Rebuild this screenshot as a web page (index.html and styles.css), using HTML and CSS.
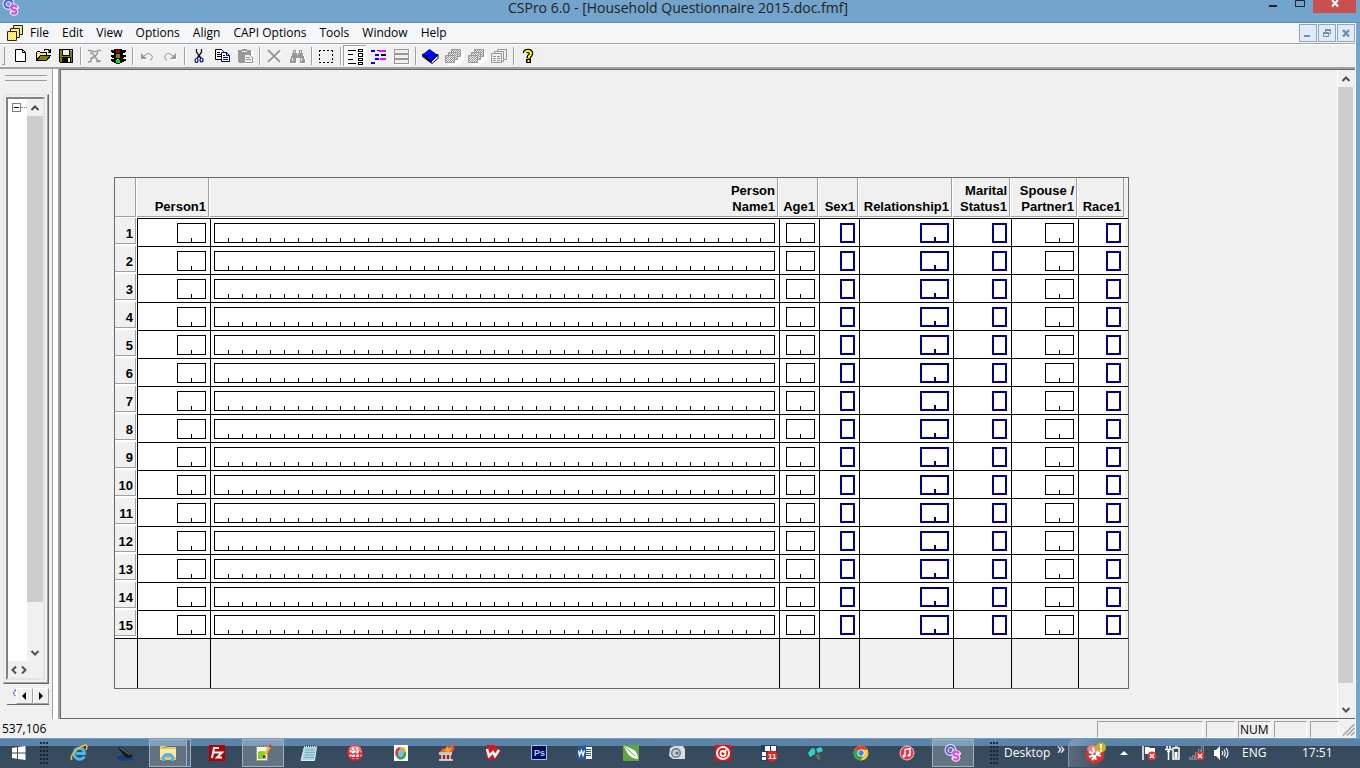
FILE: index.html
```
<!DOCTYPE html>
<html lang="en">
<head>
<meta charset="utf-8">
<title>CSPro 6.0 - [Household Questionnaire 2015.doc.fmf]</title>
<link rel="stylesheet" href="styles.css">
</head>
<body>
<svg width="0" height="0" class="defs" aria-hidden="true">
  <defs>
    <pattern id="dither" width="2" height="2" patternUnits="userSpaceOnUse"><path fill="#f0f0f0" d="M0 0h2v2H0z"/><path fill="#989898" d="M0 0h1v1H0zM1 1h1v1H1z"/></pattern>
    <pattern id="yellowdither" width="2" height="2" patternUnits="userSpaceOnUse"><path fill="#fff9c8" d="M0 0h2v2H0z"/><path fill="#f0e030" d="M0 0h1v1H0zM1 1h1v1H1z"/></pattern>
    <symbol id="cs" viewBox="0 0 18 18">
      <g fill="none" stroke="#f0eafa" stroke-width="4" stroke-linecap="round"><ellipse cx="6.500" cy="6" rx="4" ry="4"/><path d="M15 9.500Q13 7 10.500 8Q8.500 9.500 10.500 11.500L13.500 12Q15.500 14 13 15.500Q11 16 9.500 14.500"/></g>
      <path fill="none" stroke="#5a55d8" stroke-width="2" d="M10.500 4.500Q8.500 1.500 5.500 2.200Q2 3.500 2.700 7Q4 10.300 7.500 9.800"/>
      <path fill="none" stroke="#9a8be8" stroke-width="1.500" d="M10.500 4.500Q11 8 7.500 9.800"/>
      <path fill="none" stroke="#e04ad8" stroke-width="2.200" d="M15 9.500Q13 7 10.500 8Q8.500 9.500 10.500 11.500L13.500 12Q15.500 14 13 15.500Q11 16 9.500 14.500"/>
    </symbol>
    <symbol id="stack" viewBox="0 0 22 20">
      <path fill="#fff" d="M9 5h13v9h-3v3h-3v2H6v-6h3z"/>
      <g fill="url(#dither)" stroke="#989898"><path d="M9.500 3.500h9v7h-9z"/><path d="M6.500 6.500h9v7h-9z"/><path d="M3.500 9.500h9v7h-9z"/></g>
    </symbol>
    <symbol id="up" viewBox="0 0 10 8"><path fill="none" stroke="#505050" stroke-width="2" d="M1.500 6L5 2.500L8.500 6"/></symbol>
    <symbol id="down" viewBox="0 0 10 8"><path fill="none" stroke="#505050" stroke-width="2" d="M1.500 2L5 5.500L8.500 2"/></symbol>
  </defs>
</svg>

<div class="window">
  <header class="titlebar">
    <svg class="app-icon" width="18" height="18" aria-hidden="true"><use href="#cs"/></svg>
    <h1 class="title">CSPro 6.0 - [Household Questionnaire 2015.doc.fmf]</h1>
    <div class="window-buttons">
      <button class="win-btn" aria-label="Minimize"><svg width="27" height="13"><path fill="#222" d="M9 5h8v2H9z"/></svg></button>
      <button class="win-btn" aria-label="Maximize"><svg width="26" height="13"><path fill="none" stroke="#222" stroke-width="1" d="M8.500 .500h9v6h-9z"/></svg></button>
      <button class="win-btn close" aria-label="Close"><svg width="46" height="13"><path fill="none" stroke="#fff" stroke-width="2" d="M20 0l6 6.500M26 0l-6 6.500"/></svg></button>
    </div>
  </header>

  <div class="client">
    <div class="menubar">
      <svg class="doc-icon" width="17" height="17" aria-hidden="true"><g fill="url(#yellowdither)" stroke="#222"><path d="M6.500 .500h9v9h-9z"/><path d="M3.500 3.500h9v9h-9z"/><path d="M.500 6.500h9v9h-9z"/></g></svg>
      <nav class="menus">
        <button>File</button><button>Edit</button><button>View</button><button>Options</button><button>Align</button><button>CAPI Options</button><button>Tools</button><button>Window</button><button>Help</button>
      </nav>
      <div class="doc-buttons">
        <button aria-label="Minimize document"><svg width="16" height="16"><path fill="#7a8ca2" d="M4 10h6v2H4z"/></svg></button>
        <button aria-label="Restore document"><svg width="16" height="16"><path fill="none" stroke="#7a8ca2" stroke-width="1" d="M4.500 7.500h5v4h-5zM4 8.500h6M6.500 7V4.500h5v4h-2M6 5.500h6"/></svg></button>
        <button aria-label="Close document"><svg width="16" height="16"><path fill="none" stroke="#7a8ca2" stroke-width="2.500" d="M5 5l6 6.500M11 5l-6 6.500"/></svg></button>
      </div>
    </div>

    <div class="toolbar" role="toolbar" aria-label="Standard">
      <span class="grip"></span>
      <button aria-label="New"><svg width="22" height="20"><path fill="#fff" stroke="#000" d="M6.500 3.500h7l3 3v9h-10z"/><path fill="none" stroke="#000" d="M13.500 3.500v3h3"/></svg></button>
      <button aria-label="Open"><svg width="22" height="20" shape-rendering="crispEdges"><path fill="url(#yellowdither)" stroke="#000" d="M4.500 14.500v-8l1-1h2l1 1h6v3h-6z"/><path fill="#808000" stroke="#000" d="M4.500 14.500l4-5h10l-4 5z"/><path fill="none" stroke="#000" d="M12 4.500l1-1h3l2 2M18.500 3v3h-3"/></svg></button>
      <button aria-label="Save"><svg width="22" height="20" shape-rendering="crispEdges"><path fill="#808000" stroke="#000" d="M4.500 3.500h13v13h-12l-1-1z"/><path fill="#f0f0f0" stroke="#000" d="M7.500 3.500h7v6h-7z"/><path d="M7 11h9v6H7z"/><path fill="#f0f0f0" d="M13 12h2v4h-2zM16 4h1v1h-1z"/></svg></button>
      <span class="sep"></span>
      <button aria-label="Compile" disabled><svg width="22" height="20"><path fill="none" stroke="#fff" d="M5 5.500h12M7 8l9 9M16 7l-9 9H18"/><path fill="none" stroke="#989898" stroke-width="1.500" d="M4 4.500h3l1 1h5l1-1h3M6 7l3 1 5 7h3M14 6.500l-2 3-5 3v3l-3 .500M7 12h3M12 15.500h4"/></svg></button>
      <button aria-label="Run"><svg width="22" height="20" shape-rendering="crispEdges"><path d="M4 4h3V3h8v1h4v2h-1v1h-2v2h3v2h-2v1h-1v1h3v2h-2v1h-2v1h-2v1H9v-1H7v-1H5v-1H4v-2h3v-1H5v-1H4V9h3V7H5V6H4z"/><path fill="#a00000" d="M9 4h4v3H9z"/><path fill="#808000" d="M9 8h4v4H9z"/><path fill="#00f000" d="M10 13h2v1h1v3H9v-3h1z"/><path fill="#ff0" d="M10 13h1v1h-1z"/></svg></button>
      <span class="sep"></span>
      <button aria-label="Undo" disabled><svg width="22" height="20"><path fill="#fff" d="M6 8v6h6z"/><path fill="#989898" d="M5 7v6h6z"/><path fill="none" stroke="#989898" d="M8 10q4-4 7-1.500q3 2.500 0 5.500h-1"/></svg></button>
      <button aria-label="Redo" disabled><svg width="22" height="20"><path fill="#fff" d="M18 8v6h-6z"/><path fill="#989898" d="M17 7v6h-6z"/><path fill="none" stroke="#989898" d="M14 10q-4-4-7-1.500q-3 2.500 0 5.500h1"/></svg></button>
      <span class="sep"></span>
      <button aria-label="Cut"><svg width="22" height="20"><path fill="none" stroke="#000" stroke-width="1.300" d="M8.500 3v3l4 6M13.500 3v3l-4 6"/><path fill="none" stroke="#000080" stroke-width="1.300" d="M10 10.500l-1 2M12 10.500l1 2"/><ellipse cx="8.500" cy="14.500" rx="1.500" ry="2" fill="none" stroke="#000080" stroke-width="1.200"/><ellipse cx="13.500" cy="14" rx="1.500" ry="2" fill="none" stroke="#000080" stroke-width="1.200"/></svg></button>
      <button aria-label="Copy"><svg width="22" height="20"><path fill="#fff" stroke="#000" d="M4.500 3.500h6l2 2v8h-8z"/><path stroke="#000" d="M6 6.500h3M6 8.500h4M6 10.500h4"/><path fill="#fff" stroke="#000080" d="M10.500 6.500h5l3 3v6h-8zM15.500 6.500v3h3"/><path stroke="#000080" d="M12 9.500h2M12 11.500h5M12 13.500h5"/></svg></button>
      <button aria-label="Paste" disabled><svg width="22" height="20" shape-rendering="crispEdges"><path fill="#fff" d="M6 5h13v13H10v-1H6z"/><path fill="#989898" d="M4 4h4V3h5v1h4v13H5v-1H4z"/><path fill="#eee" d="M8 5h5v1H8z"/><path fill="#f0f0f0" stroke="#989898" d="M10.500 8.500h5l3 3v5h-8z"/><path stroke="#989898" d="M12 11.500h4M12 13.500h5"/></svg></button>
      <span class="sep"></span>
      <button aria-label="Delete" disabled><svg width="22" height="20"><path fill="none" stroke="#fff" stroke-width="2" d="M6 5l12 12M18 6L6 17"/><path fill="none" stroke="#989898" stroke-width="1.800" d="M5 4l12 12M17 4.500L5 16"/></svg></button>
      <button aria-label="Find" disabled><svg width="22" height="20" shape-rendering="crispEdges"><path fill="#fff" d="M8 5h3v4h2V5h3l4 8v5h-6v-5h-3v5H6v-6z"/><path fill="#989898" d="M7 4h3v3h1v2h1V7h1V4h3v3h1v3h1v3h1v4h-5v-5h-4v5H4v-4h1v-3h1V7h1z"/><path fill="#eee" d="M8 5h1v2H8zM14 5h1v2h-1zM6 12h1v3H6zM15 12h1v3h-1z"/></svg></button>
      <span class="sep"></span>
      <button aria-label="Select items"><svg width="22" height="20" shape-rendering="crispEdges"><path fill="none" stroke="#000" stroke-width="1" stroke-dasharray="2 2" d="M4 4.500h14M4 16.500h14M4.500 4v13M17.500 4v13"/></svg></button>
      <span class="sep"></span>
      <button class="pressed" aria-label="Form view" aria-pressed="true"><svg width="22" height="20" shape-rendering="crispEdges"><path stroke="#000" d="M4 4.500h8M4 8.500h5M4 13.500h5M4 17.500h8"/><g fill="#fff" stroke="#000"><path d="M14.500 3.500h4v2h-4zM14.500 7.500h4v3h-4zM14.500 12.500h4v2h-4zM14.500 16.500h4v2h-4z"/></g></svg></button>
      <button aria-label="Logic view"><svg width="22" height="20" shape-rendering="crispEdges"><path fill="#00f" d="M4 4h4v2H4zM8 8h4v2H8zM8 12h4v2H8zM4 16h4v2H4z"/><path fill="#f0f" d="M12 4h7v2h-7zM13 12h6v2h-6z"/><path fill="#000080" d="M10 4h2v1h-2z"/><path d="M14 8h5v2h-5z"/></svg></button>
      <button aria-label="Grid view" disabled><svg width="22" height="20" shape-rendering="crispEdges"><path fill="none" stroke="#fff" d="M5.500 4.500h14v14h-14z"/><path fill="#f0f0f0" stroke="#989898" d="M4.500 3.500h14v14h-14zM4 7.500h14M4 8.500h14M4 12.500h14M4 13.500h14"/></svg></button>
      <span class="sep"></span>
      <button aria-label="Data dictionary"><svg width="22" height="20"><path fill="#fff" stroke="#000" d="M3.500 8.500v2L13 17.500l6-5v-4z"/><path fill="#00f" stroke="#0000a0" d="M3.500 8.500l2-1L10.500 3.500l8 6-6 6z"/><path stroke="#000" stroke-width="1.500" d="M3.500 9l9 7.500"/></svg></button>
      <button aria-label="Forms" disabled><svg width="22" height="20"><use href="#stack"/></svg></button>
      <button aria-label="Order" disabled><svg width="22" height="20"><use href="#stack"/></svg></button>
      <button aria-label="Tables" disabled><svg width="22" height="20"><g fill="#f0f0f0" stroke="#989898"><path d="M9.500 3.500h9v10h-9z"/><path d="M6.500 5.500h9v10h-9z"/><path d="M3.500 7.500h10v9h-10zM5 10.500h3M9 10.500h3M5 12.500h3M9 12.500h3M5 14.500h3M9 14.500h3"/></g></svg></button>
      <span class="sep"></span>
      <button aria-label="Help"><svg width="22" height="20"><path fill="none" stroke="#000" stroke-width="4.500" d="M8 7q0-2 3-2t3 2.500q0 1.500-2 3l-.500 2"/><path fill="#000" d="M9 13h5v4H9z"/><path fill="none" stroke="#ff0" stroke-width="2" d="M8 7q0-2 3-2t3 2.500q0 1.500-2 3v1.500"/><path fill="#ff0" d="M10.500 14h2v2h-2z"/></svg></button>
    </div>

    <main class="workspace">
      <aside class="dock">
        <div class="dock-grip"></div>
        <div class="tree-frame">
          <div class="tree-box">
            <div class="tree-row">
              <div class="tree"><button class="expander" aria-label="Collapse"></button><span class="dots"></span></div>
              <div class="scroll">
                <button aria-label="Scroll up"><svg width="10" height="8"><use href="#up"/></svg></button>
                <span class="thumb"></span>
                <span class="track"></span>
                <button aria-label="Scroll down"><svg width="10" height="8"><use href="#down"/></svg></button>
              </div>
            </div>
            <div class="hscroll">
              <button aria-label="Scroll left"><svg width="8" height="10"><path fill="none" stroke="#505050" stroke-width="2" d="M6 1.500L2.500 5L6 8.500"/></svg></button>
              <button aria-label="Scroll right"><svg width="8" height="10"><path fill="none" stroke="#505050" stroke-width="2" d="M2 1.500L5.500 5L2 8.500"/></svg></button>
            </div>
          </div>
        </div>
        <div class="tabs">
          <svg width="9" height="16" aria-hidden="true"><path fill="none" stroke="#6a60e0" stroke-width="1.500" stroke-dasharray="2 1" d="M9 2Q5 4 8 8"/></svg>
          <button aria-label="Previous tab"><svg width="12" height="12"><path d="M8 2v8L4 6z"/></svg></button>
          <button aria-label="Next tab"><svg width="12" height="12"><path d="M4 2v8l4-4z"/></svg></button>
        </div>
      </aside>
      <div class="splitter"></div>
      <section class="form-view">
        <div class="canvas">
          <table class="roster">
            <colgroup><col class="c-num"><col class="c-person"><col class="c-name"><col class="c-age"><col class="c-sex"><col class="c-rel"><col class="c-mar"><col class="c-spouse"><col class="c-race"></colgroup>
            <thead>
              <tr><td class="corner"></td><th scope="col">Person1</th><th scope="col">Person<br>Name1</th><th scope="col">Age1</th><th scope="col">Sex1</th><th scope="col">Relationship1</th><th scope="col">Marital<br>Status1</th><th scope="col">Spouse /<br>Partner1</th><th scope="col" class="last">Race1</th></tr>
            </thead>
            <tbody id="rows"></tbody>
            <tfoot><tr><td></td><td></td><td></td><td></td><td></td><td></td><td></td><td></td><td></td></tr></tfoot>
          </table>
        </div>
        <div class="scroll main-scroll">
          <button aria-label="Scroll form up"><svg width="10" height="8"><use href="#up"/></svg></button>
          <span class="thumb"></span>
          <span class="track"></span>
          <button aria-label="Scroll form down"><svg width="10" height="8"><use href="#down"/></svg></button>
        </div>
      </section>
    </main>

    <footer class="statusbar">
      <span class="coords">537,106</span>
      <span class="pane wide"></span><span class="pane"></span><span class="pane num">NUM</span><span class="pane"></span><span class="pane"></span>
      <svg class="size-grip" width="13" height="14" aria-hidden="true"><path fill="none" stroke="#a0a0a0" stroke-width="1.500" d="M1 13.500L12.500 2M5 13.500L12.500 6M9 13.500l3.500-3.500"/></svg>
    </footer>
  </div>
</div>

<div class="taskbar">
  <button class="start" aria-label="Start"><svg width="14" height="14"><path fill="#fff" d="M0 2l5-.700v5.200H0zM6 1.100l7.500-1.100v6.500H6zM0 7.500h5v5.200L0 12zM6 7.500h7.500V14L6 12.900z"/></svg></button>
  <span class="band-grip"></span>
  <div class="apps">
    <button aria-label="Internet Explorer"><svg width="18" height="18"><path fill="none" stroke="#49b4ee" stroke-width="3" d="M14.500 12.500Q12 16 8 15Q3.500 13 4 9Q5 4 9.500 4Q14 4.500 14.500 9.500H6"/><path fill="none" stroke="#f6c12c" stroke-width="1.500" d="M2 16Q-1 12 8 5Q16-1 17 2Q17.500 3 16 6"/></svg></button>
    <button aria-label="Scanner"><svg width="18" height="18"><ellipse cx="9" cy="14" rx="8" ry="3" fill="#123f78"/><path fill="#191919" d="M2 4l4-1 9 7 2 2-5 2-3-1z"/><path fill="#555" d="M3 4l3-.500 9 7-2 .500z"/></svg></button>
    <button class="active grouped" aria-label="File Explorer"><svg width="18" height="18"><path fill="#e8c768" d="M1 2h6l1 1h9v13H1z"/><path fill="#fbe9a3" d="M1 5h16v8H1z"/><path fill="#6cb84c" d="M4 3h4v1H4z"/><path fill="#53b5e6" d="M3 17v-4q1-4 6-4t6 4v4h-3v-4H6v4z"/></svg></button>
    <button aria-label="FileZilla"><svg width="18" height="18"><path fill="#b80000" d="M1 1h16v16H1z"/><path fill="none" stroke="#fff" stroke-width="2" d="M4 14L6 4h5M5 8.500h4M9 8.500h5l-5 5h5"/></svg></button>
    <button class="active" aria-label="Notepad++"><svg width="18" height="18"><path fill="#f7f7f2" stroke="#999" d="M2.500 2.500h11v14h-11z"/><path fill="#8acb28" d="M4 8q4-2 8 0v7H4z"/><path stroke="#777" stroke-dasharray="1 1" stroke-width="2" d="M3 2h10"/><path stroke="#f3b61c" stroke-width="2.500" d="M16 2.500L10 12"/><path stroke="#d33" stroke-width="2.500" d="M15.500 3L17 1"/><path d="M9 14l.500-3 2 1.500z"/></svg></button>
    <button aria-label="Notepad"><svg width="18" height="18"><path fill="#a9d7e6" stroke="#d8eef4" d="M4.500 2.500h12l-2 14H1z"/><path stroke="#78afc4" d="M5 6h10M5 8.500h10M4.500 11h10M4 13.500h10"/><path stroke="#555" stroke-dasharray="1 1" stroke-width="2" d="M5 2h11"/></svg></button>
    <button aria-label="Red dots"><svg width="18" height="18"><circle cx="9" cy="9" r="8" fill="#d9272f"/><ellipse cx="9" cy="5" rx="6" ry="3.500" fill="#ef7f7f"/><path stroke="#fff" stroke-width="2.200" stroke-dasharray="2.200 1.500" d="M3.500 7.500h12M3.500 11.500h12M7 3.500v11.500M11.200 3.500v11.500"/></svg></button>
    <button aria-label="Media"><svg width="18" height="18"><path fill="#fff" d="M2 1h14v16H2z"/><ellipse cx="9" cy="9" rx="4" ry="5" fill="#7bb8ee"/><path fill="none" stroke="#e02f28" stroke-width="2.500" d="M5 12Q3 5 8.500 4"/><path fill="none" stroke="#f1b51b" stroke-width="2.500" d="M7.500 4Q13 3.500 13 9"/><path fill="none" stroke="#36a53e" stroke-width="2.500" d="M13 8.500Q13 14.500 8 14.500Q6 14 5 11"/></svg></button>
    <button aria-label="Firewall"><svg width="18" height="18"><path fill="#f25a1e" d="M1 9l4-5 1 1 4-4 1 2 6-3-2 4 2-1-3 6z"/><path fill="#ffae34" d="M6 7l4-4v2l4-2-3 5z"/><path fill="#c9c4bd" d="M1 8h13v3H1zM1 15h14v2H1z"/><path fill="#8e2b24" d="M2 11h12v4H2z"/><path stroke="#ddd" stroke-width="1.500" d="M4 10v6M8 10v6M12 10v6"/></svg></button>
    <button aria-label="WPS Writer"><svg width="18" height="18"><path fill="#d8131d" d="M3 1h7l7 6-5 8-8 1-2-5z"/><path fill="none" stroke="#fff" stroke-width="2.500" d="M3 5l2 7 4-4 2 4 4-6"/></svg></button>
    <button aria-label="Photoshop"><svg width="18" height="18"><path fill="#0c0752" stroke="#8fc9fa" d="M1.500 1.500h15v14h-15z"/><text class="ps" x="4" y="12">Ps</text></svg></button>
    <button aria-label="Word"><svg width="18" height="18"><path fill="#fff" d="M9 3h7v12H9z"/><path stroke="#2a579a" d="M10 5.500h5M10 7.500h5M10 9.500h5M10 11.500h5"/><path fill="#2a579a" d="M1 3l9-2v16l-9-2z"/><path fill="none" stroke="#fff" stroke-width="1.300" d="M2.500 6.500l1 5 2-5 1.500 5 1.500-5"/></svg></button>
    <button aria-label="CorelDRAW"><svg width="18" height="18"><path fill="#5ca83b" d="M1 1h16v16H1z"/><path fill="#fff" d="M1 1l11 5q4 3 4 9Q10 15 6 10z"/><path stroke="#5ca83b" stroke-width="1" d="M1 1l12 11"/></svg></button>
    <button aria-label="Camera"><svg width="18" height="18"><path fill="#d9dde0" d="M2 4l4-2h9l2 3v10H5l-4-3z"/><circle cx="8" cy="9" r="5" fill="#6d7883"/><circle cx="8" cy="9" r="3.500" fill="#c3ced9"/><circle cx="9" cy="9" r="1.500" fill="#3b6d9c"/></svg></button>
    <button aria-label="Target"><svg width="18" height="18"><path fill="#f00c0c" d="M1 1h16v16H1z"/><circle cx="9" cy="9" r="6" fill="none" stroke="#fff" stroke-width="2"/><circle cx="9" cy="9.500" r="2.500" fill="none" stroke="#fff" stroke-width="1.800"/><path stroke="#fff" stroke-width="1.500" d="M9.500 9l3.500-4"/></svg></button>
    <button aria-label="Tiles, 11 notifications"><svg width="18" height="18"><path fill="#1d456b" d="M1 1h16v16H1z"/><path fill="#fff" d="M5 2h5v5H5zM11 2h5v5h-5zM2 8h4v4H2zM2 13h4v3H2z"/><circle cx="12" cy="12" r="5.500" fill="#e5261f"/><text class="badge" x="8" y="15">11</text></svg></button>
    <button aria-label="Binoculars"><svg width="18" height="18"><path fill="#3c4a4b" d="M1 11l5-7 4 2 5-4 3 9-2 6-5 0-3-4-5 2z"/><path fill="#2fd1d3" d="M2 9l4-5 3 1v5l-5 3zM10 5l5-2 2 4-5 2z"/><path fill="#5b6c6c" d="M9 11l4-1 2 5-3 1z"/></svg></button>
    <button aria-label="Chrome"><svg width="18" height="18"><circle cx="9" cy="9" r="7.500" fill="#f6ca31"/><path fill="#dc4437" d="M9 9L2.500 5.200A7.500 7.500 0 0 1 15.700 5.700H9z"/><path fill="#2da44f" d="M9 9L2.500 5.200A7.500 7.500 0 0 0 8.500 16.500l3.500-6z"/><circle cx="9" cy="9" r="3.600" fill="#fff"/><circle cx="9" cy="9" r="2.700" fill="#4285d6"/></svg></button>
    <button aria-label="iTunes"><svg width="18" height="18"><circle cx="9" cy="9" r="7" fill="#ec3448" stroke="#f3c9cd" stroke-width="1"/><path fill="none" stroke="#fff" stroke-width="1.500" d="M7 12V5.500l5-1V11"/><circle cx="6" cy="12" r="1.500" fill="#fff"/><circle cx="11" cy="11.300" r="1.500" fill="#fff"/></svg></button>
    <button class="active" aria-label="CSPro"><svg width="18" height="18"><use href="#cs"/></svg></button>
  </div>
  <span class="band-grip right"></span>
  <span class="desktop-label">Desktop</span>
  <button class="chevrons" aria-label="More">»</button>
  <div class="tray">
    <button class="alert" aria-label="Security alert"><svg width="22" height="22"><circle cx="10" cy="12" r="9.500" fill="#d63030"/><ellipse cx="9" cy="7" rx="7" ry="4" fill="#ea8383"/><path stroke="#fff" stroke-width="2.200" stroke-dasharray="5 2.500" d="M4 10l12 4M8 5.500l3 13M14 8l-7 10M4 15l12-5"/><circle cx="16" cy="5.500" r="5" fill="#c9b01c"/><path stroke="#fff" stroke-width="2" d="M16 2v4.500M16 7.500v2"/></svg></button>
    <button class="more" aria-label="Show hidden icons"><svg width="9" height="6"><path fill="#fff" d="M0 5l4-4 4 4z"/></svg></button>
    <button aria-label="Action Center"><svg width="16" height="16"><path stroke="#fff" stroke-width="1.500" d="M2 1v14"/><path fill="#fff" d="M4 2h4l1 1h5v7H9L8 9H4z"/><circle cx="11" cy="11" r="4.500" fill="#e03228"/><path stroke="#fff" stroke-width="1.500" d="M9 9l4 4M13 9l-4 4"/></svg></button>
    <button aria-label="Battery"><svg width="16" height="16"><path fill="none" stroke="#fff" stroke-width="1.500" d="M8 3h6v11H8zM10 2h2.500M2 1v3M5 1v3M0 4.500h7M3.500 5v10M2 6.500h3"/><path fill="#fff" d="M9.500 7h3v6h-3z"/></svg></button>
    <button aria-label="Network"><svg width="16" height="16"><path fill="none" stroke="#808c97" d="M.500 12.500h2v2h-2zM3.500 10.500h2v4h-2zM6.500 7.500h2v7h-2zM9.500 4.500h2v8h-2zM12.500 1.500h2v9h-2z"/><circle cx="11" cy="11" r="4.500" fill="#e03228"/><path stroke="#fff" stroke-width="1.500" d="M9 9l4 4M13 9l-4 4"/></svg></button>
    <button aria-label="Volume"><svg width="16" height="16"><path fill="#fff" d="M1 5h2l4-4v14l-4-4H1z"/><path fill="none" stroke="#fff" stroke-width="1.200" d="M9 6q1.500 2 0 4M11 4.500q2.500 3.500 0 7M13 3q4 5 0 10"/></svg></button>
    <button class="lang">ENG</button>
    <time class="clock">17:51</time>
  </div>
</div>
<script src="app.js"></script>
</body>
</html>
```

FILE: styles.css
```
* { box-sizing: border-box; }
body {
  margin: 0;
  height: 100vh;
  display: flex;
  flex-direction: column;
  overflow: hidden;
  background: #f0f0f0;
  color: #000;
  font: 12px/16px "Open Sans", "Noto Sans", sans-serif;
}
button {
  padding: 0;
  border: 0;
  background: none;
  color: inherit;
  font: inherit;
  display: flex;
  align-items: center;
  justify-content: center;
}
svg { display: block; flex: none; }
.defs { position: absolute; }

.window { flex: 1; min-height: 0; display: flex; flex-direction: column; background: #73a4cc; }
.titlebar {
  height: 23px;
  display: grid;
  grid-template-columns: 100px 1fr 100px;
  border-bottom: 1px solid #5c8db8;
}
.app-icon { margin-left: 2px; margin-top: -2px; }
.title { margin: 0; padding-right: 4px; text-align: center; font-size: 14px; line-height: 20px; height: 20px; margin-top: -2px; font-weight: 400; color: #222; white-space: nowrap; }
.window-buttons { display: flex; justify-content: flex-end; align-items: flex-start; padding-right: 4px; }
.close { width: 45px; height: 13px; background: #c85050; overflow: hidden; }

.client { flex: 1; min-height: 0; display: flex; flex-direction: column; margin-right: 4px; background: #f0f0f0; border-right: 1px solid #fff; }
.menubar { display: flex; align-items: center; height: 21px; padding-left: 7px; background: #f5f6f7; border-bottom: 1px solid #a0a0a0; }
.menus { flex: 1; display: flex; gap: 13px; margin-left: 6px; }
.doc-buttons { display: flex; gap: 1px; }
.doc-buttons button { width: 18px; height: 18px; border: 1px solid #92a4b9; background: #dfebf7; }

.toolbar { display: flex; align-items: center; height: 25px; border-top: 1px solid #fff; border-bottom: 2px solid #a0a0a0; padding-bottom: 1px; }
.toolbar button { width: 23px; height: 21px; }
.toolbar .pressed { background: #f8f8f8; box-shadow: inset 1px 1px #a0a0a0, inset -2px -1px #fff; }
.grip { width: 3px; height: 18px; margin: 0 3px 0 2px; border-right: 1px solid #a0a0a0; border-bottom: 1px solid #a0a0a0; }
.sep { width: 6px; height: 18px; background: linear-gradient(#a0a0a0, #a0a0a0) 3px 0 / 1px 100% no-repeat, linear-gradient(#fff, #fff) 4px 0 / 1px 100% no-repeat; }

.workspace { flex: 1; min-height: 0; display: flex; }
.dock { width: 52px; display: flex; flex-direction: column; padding: 6px 3px 14px; }
.dock-grip { height: 6px; margin: 0 0 13px 2px; width: 42px; border: 1px solid #a0a0a0; border-width: 1px 0; }
.tree-frame { flex: 1; min-height: 0; display: flex; border: 1px solid; border-color: #e3e3e3 #696969 #696969 #e3e3e3; box-shadow: inset -1px -1px #a0a0a0; padding: 2px 3px 3px 2px; }
.tree-box { flex: 1; display: flex; flex-direction: column; border: 2px solid; border-color: #828282 #e3e3e3 #e3e3e3 #828282; }
.tree-row { flex: 1; min-height: 0; display: flex; }
.tree { flex: 1; background: #fff; display: flex; height: 100%; align-items: flex-start; padding: 4px 0 0 4px; }
.expander { width: 9px; height: 9px; border: 1px solid #808080; background: linear-gradient(#000, #000) center / 5px 1px no-repeat; }
.dots { flex: 1; margin-top: 4px; border-top: 1px dotted #808080; }
.scroll { width: 16px; display: flex; flex-direction: column; }
.scroll button { height: 17px; width: 15px; flex: none; }
.thumb { flex: 1; background: #cdcdcd; }
.track { height: 42px; }
.hscroll { height: 17px; display: flex; gap: 2px; padding-left: 2px; }
.tabs { display: flex; height: 17px; margin: 4px 0 0 4px; border-bottom: 1px solid #696969; }
.tabs button { width: 17px; border: 1px solid; border-color: #fff #a0a0a0 #a0a0a0 #fff; }
.splitter { width: 8px; border-left: 1px solid #a0a0a0; border-right: 2px solid #a0a0a0; background: #fff; }
.form-view { flex: 1; min-width: 0; display: flex; border: 1px solid #696969; border-right: 0; }
.canvas { flex: 1; min-width: 0; overflow: hidden; padding: 107px 0 0 53px; }
.main-scroll { width: 18px; padding-right: 2px; border-left: 1px solid #fff; }
.main-scroll .track { height: 18px; }

.roster {
  table-layout: fixed;
  width: 1015px;
  border: 1px solid #696969;
  border-collapse: separate;
  border-spacing: 0;
  font: bold 13px/16px "Liberation Sans", Arial, sans-serif;
}
.c-num { width: 22px; }
.c-person { width: 73px; }
.c-name { width: 569px; }
.c-age, .c-sex { width: 40px; }
.c-rel { width: 94px; }
.c-mar { width: 58px; }
.c-spouse { width: 67px; }
.c-race { width: 50px; }
.roster th, .roster td { padding: 0; white-space: nowrap; text-align: right; vertical-align: bottom; }
.roster thead th, .roster thead td { height: 40px; padding: 0 3px 2px 0; border-bottom: 1px solid #fff; border-right: 1px solid #fff; box-shadow: inset -1px -1px #a0a0a0; }
.roster thead .last { border-right: 4px solid #f0f0f0; }
.roster tbody th { height: 28px; padding: 0 3px 2px 0; border-bottom: 2px solid #fff; border-right: 1px solid #fff; box-shadow: inset -1px -1px #a0a0a0; }
.roster tbody td { height: 28px; padding: 4px 4px 3px 3px; border-top: 1px solid #000; border-left: 1px solid #000; background: #fff; }
.roster tbody td:last-child { padding-right: 7px; box-shadow: inset -3px 0 #f0f0f0; }
.roster tfoot td { height: 50px; border-top: 1px solid #000; border-left: 1px solid #000; }
.roster tfoot td:first-child { border-left: 0; }
.field {
  display: block;
  width: 29px;
  height: 20px;
  margin-left: auto;
  padding: 0;
  border: 1px solid #000;
  border-radius: 0;
  outline: 0;
  background: linear-gradient(90deg, #000 1px, transparent 1px) left bottom / 14px 5px repeat-x border-box;
}
.field.long { width: 100%; }
.field.coded { border: 2px solid #000080; background-image: linear-gradient(90deg, #000080 2px, transparent 2px); background-size: 14px 6px; }
.field.single { width: 15px; background: #fff; }

.statusbar { display: flex; align-items: center; height: 19px; padding: 1px 0 0 2px; gap: 3px; }
.coords { flex: 1; }
.pane { width: 29px; height: 17px; border: 1px solid #a0a0a0; border-right-color: #fff; border-bottom-color: #fff; }
.pane.wide { width: 106px; }
.pane.num, .num + .pane { width: 33px; }
.pane.num { padding-left: 1px; }

.taskbar { height: 30px; display: flex; align-items: center; color: #fff; background: linear-gradient(#6f9cc2 1px, #5c84a8 1px 8px, #35495c 8px, #3b4e61); }
.start { width: 38px; height: 30px; }
.band-grip { width: 9px; height: 22px; margin: 0 8px 0 2px; background: conic-gradient(at 2px 2px, transparent 270deg, #1b2732 0) 0 0 / 3px 4px; }
.apps { display: flex; margin-left: -1px; }
.apps button { width: 46px; height: 30px; }
.apps .active { width: 42px; height: 28px; margin: 1px 2px; border: 1px solid #9fb0bf; background: #ffffff38; }
.apps .grouped { margin: 1px 3px 1px 1px; box-shadow: inset -3px 0 #52687c, inset -4px 0 #9fb0bf; padding-right: 4px; }
.ps { fill: #9bd2ff; font: bold 9px "Liberation Sans", Arial, sans-serif; }
.badge { fill: #fff; font: bold 8px "Liberation Sans", Arial, sans-serif; }
.band-grip.right { margin: 0 5px 0 14px; }
.desktop-label { width: 50px; }
.chevrons { width: 14px; height: 26px; margin-right: auto; font-size: 16px; align-items: flex-start; }
.tray { height: 28px; width: 292px; display: flex; align-items: center; gap: 8px; padding: 0 0 0 16px; border-left: 1px solid #8299ad; border-radius: 8px 0 0 0; background: linear-gradient(100deg, #ffffff30, transparent 40px); }
.alert { margin-right: 5px; }
.more { margin-right: 4px; }
.tray .lang { margin-left: 5px; }
.clock { margin: 0 auto; }
```

FILE: app.js
```
const fields = [
  { label: 'Person', kind: '' },
  { label: 'Person name', kind: 'long', size: 40 },
  { label: 'Age', kind: '' },
  { label: 'Sex', kind: 'coded single', size: 1 },
  { label: 'Relationship', kind: 'coded' },
  { label: 'Marital status', kind: 'coded single', size: 1 },
  { label: 'Spouse or partner', kind: '' },
  { label: 'Race', kind: 'coded single', size: 1 }
];
const body = document.getElementById('rows');
for (let n = 1; n <= 15; n++) {
  const row = body.insertRow();
  const head = document.createElement('th');
  head.scope = 'row';
  head.textContent = n;
  row.append(head);
  for (const f of fields) {
    const input = document.createElement('input');
    input.className = ('field ' + f.kind).trim();
    input.maxLength = f.size || 2;
    input.setAttribute('aria-label', f.label + ' ' + n);
    row.insertCell().append(input);
  }
}
```
